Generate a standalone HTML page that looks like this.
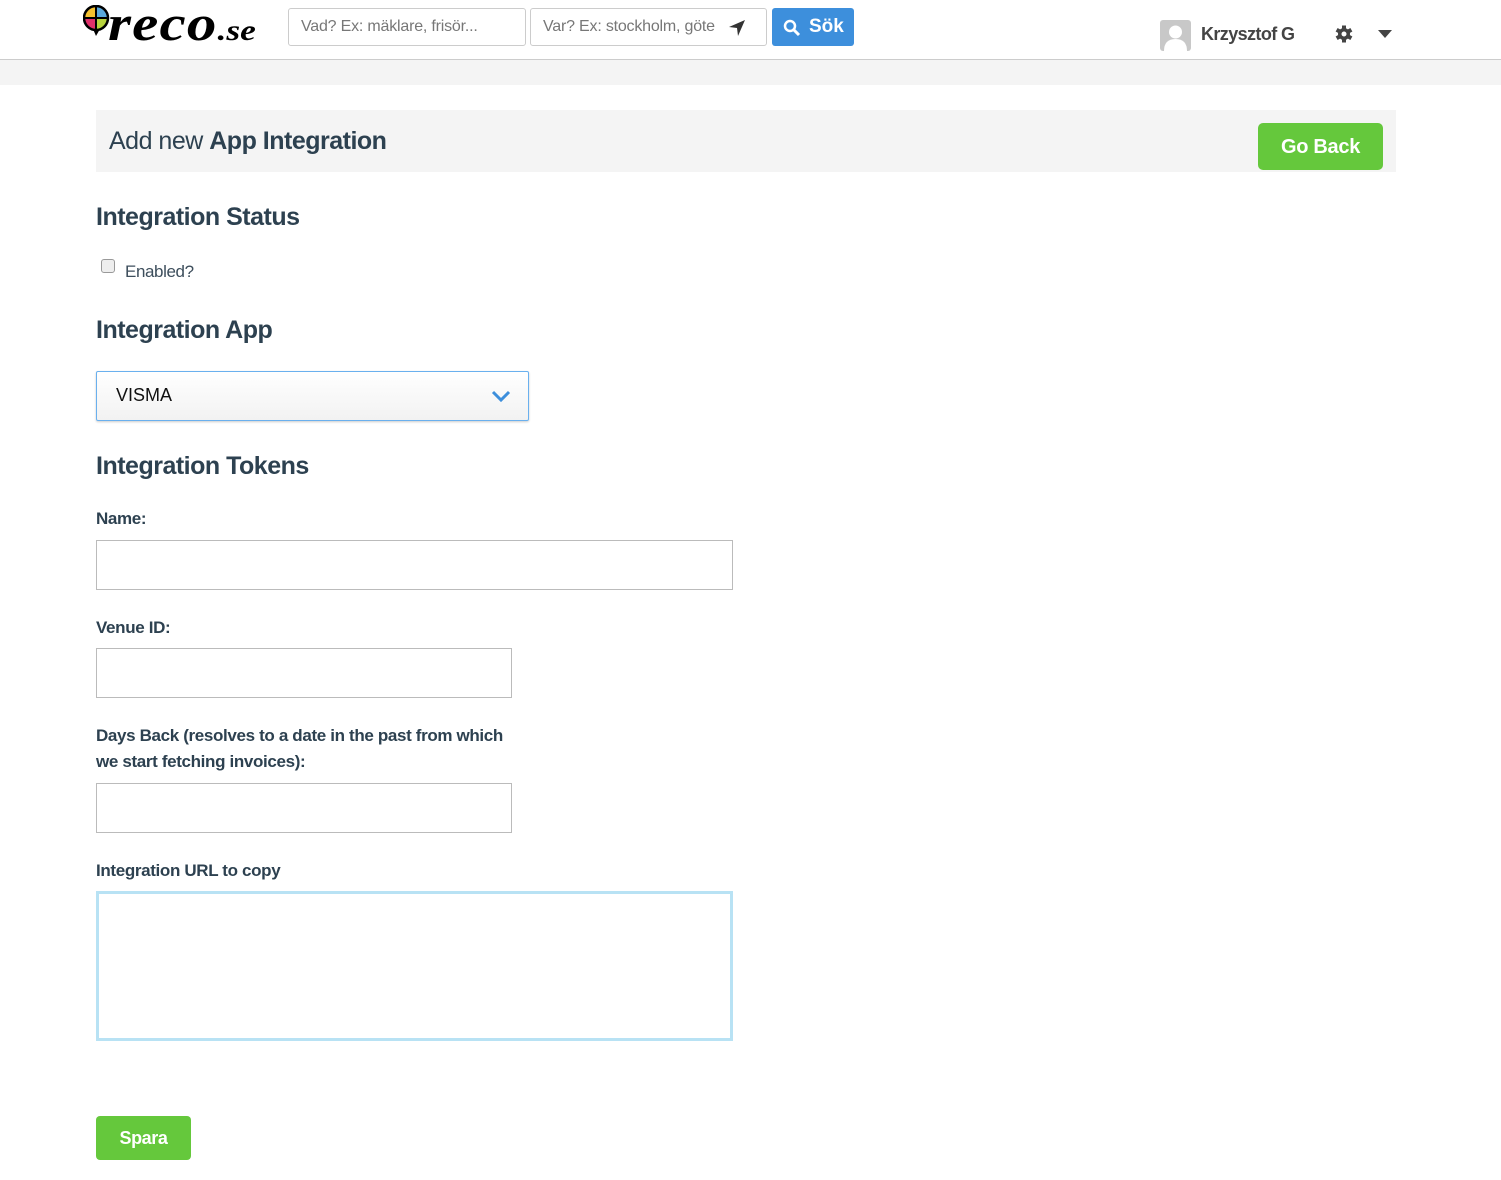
<!DOCTYPE html>
<html><head><meta charset="utf-8"><style>
*{box-sizing:border-box}
body{margin:0;width:1501px;height:1180px;background:#fff;font-family:"Liberation Sans",sans-serif;color:#2d3e4c;position:relative;overflow:hidden}
.abs{position:absolute}
.hdr{position:absolute;left:0;top:0;width:1501px;height:60px;border-bottom:1px solid #ccc;background:#fff}
.band{position:absolute;left:0;top:60px;width:1501px;height:25px;background:#f4f4f4}
.inp{position:absolute;border:1px solid #ccc;border-radius:3px;background:#fff;font-size:16px;color:#777;padding-left:12px;line-height:36px;overflow:hidden;white-space:nowrap;letter-spacing:-0.2px}
h2{position:absolute;margin:0;font-size:25px;font-weight:bold;color:#2d4150;left:96px;letter-spacing:-0.5px}
.lbl{position:absolute;left:96px;font-size:17px;font-weight:bold;color:#2d4150;line-height:26px;letter-spacing:-0.35px}
.box{position:absolute;left:96px;border:1px solid #bbb;background:#fff}
</style></head><body>
<div class="hdr"></div>
<div class="band"></div>
<svg class="abs" style="left:83px;top:5px" width="30" height="34" viewBox="0 0 30 34">
<path d="M13 1 A12 12 0 0 0 1 13 H13Z" fill="#f4c130"/><path d="M13 1 A12 12 0 0 1 25 13 H13Z" fill="#5aa8dc"/>
<path d="M1 13 A12 12 0 0 0 13 25 V13Z" fill="#e0306a"/><path d="M25 13 A12 12 0 0 1 13 25 V13Z" fill="#b7d33d"/>
<circle cx="13" cy="13" r="12" fill="none" stroke="#000" stroke-width="2.5"/><path d="M1 13H25M13 1V25" stroke="#000" stroke-width="2"/>
<path d="M10 24 L13 31 L17 24" fill="#000"/></svg>
<div class="abs" style="left:108px;top:-6px;font-family:'Liberation Serif',serif;font-style:italic;font-weight:bold;font-size:50px;color:#000;letter-spacing:1px;transform:scaleX(1.18);transform-origin:left">reco<span style="font-size:30px;letter-spacing:0">.se</span></div>
<div class="inp" style="left:288px;top:8px;width:238px;height:38px">Vad? Ex: mäklare, frisör...</div>
<div class="inp" style="left:530px;top:8px;width:237px;height:38px">Var? Ex: stockholm, göte<svg style="position:absolute;left:197px;top:10px" width="18" height="18" viewBox="0 0 18 18"><path d="M17 1 L1 8 L9 9 L10 17Z" fill="#333"/></svg></div>
<div class="abs" style="left:772px;top:8px;width:82px;height:38px;background:#3d8fdc;border-radius:3px;color:#fff;font-weight:bold;font-size:19px;line-height:38px;padding-left:37px">Sök
<svg style="position:absolute;left:11px;top:11px" width="18" height="18" viewBox="0 0 18 18"><circle cx="7" cy="7" r="5" fill="none" stroke="#fff" stroke-width="2.5"/><path d="M10.5 10.5 L16 16" stroke="#fff" stroke-width="3"/></svg></div>
<svg class="abs" style="left:1160px;top:20px" width="31" height="31" viewBox="0 0 31 31"><rect width="31" height="31" rx="3" fill="#c8c8c8"/><circle cx="15.5" cy="12" r="6.5" fill="#fff"/><path d="M4 31 Q4 19 15.5 19 Q27 19 27 31Z" fill="#fff"/></svg>
<div class="abs" style="left:1201px;top:24px;font-size:18px;font-weight:bold;color:#444;letter-spacing:-0.6px">Krzysztof G</div>
<svg class="abs" style="left:1335px;top:25px" width="18" height="18" viewBox="0 0 18 18"><g fill="#444"><circle cx="9" cy="9" r="6"/><rect x="7" y="0.5" width="4" height="17"/><rect x="7" y="0.5" width="4" height="17" transform="rotate(60 9 9)"/><rect x="7" y="0.5" width="4" height="17" transform="rotate(120 9 9)"/></g><circle cx="9" cy="9" r="2.5" fill="#fff"/></svg>
<svg class="abs" style="left:1378px;top:30px" width="14" height="8"><path d="M0 0H14L7 8Z" fill="#444"/></svg>
<div class="abs" style="left:96px;top:110px;width:1300px;height:62px;background:#f4f4f4"></div>
<div class="abs" style="left:109px;top:127px;font-size:25px;color:#2d4150;letter-spacing:-0.5px">Add new <b>App Integration</b></div>
<div class="abs" style="left:1258px;top:123px;width:125px;height:47px;background:#65c83c;border-radius:5px;color:#fff;font-weight:bold;font-size:20px;line-height:49px;text-align:center;letter-spacing:-0.3px">Go Back</div>
<h2 style="top:203px">Integration Status</h2>
<div class="abs" style="left:101px;top:259px;width:14px;height:14px;border:1px solid #999;border-radius:3px;background:#eee"></div>
<div class="abs" style="left:125px;top:262px;font-size:17px;color:#3d4e5c;letter-spacing:-0.4px">Enabled?</div>
<h2 style="top:316px">Integration App</h2>
<div class="abs" style="left:96px;top:371px;width:433px;height:50px;border:1px solid #6ab0ee;border-radius:2px;background:linear-gradient(#fff,#f2f2f2);box-shadow:0 1px 2px rgba(0,0,0,.2);font-size:18px;color:#111;line-height:46px;padding-left:19px">VISMA
<svg style="position:absolute;left:394px;top:18px" width="20" height="12"><path d="M2 2 L10 10 L18 2" fill="none" stroke="#3d8fdc" stroke-width="3"/></svg></div>
<h2 style="top:452px">Integration Tokens</h2>
<div class="lbl" style="top:506px">Name:</div>
<div class="box" style="top:540px;width:637px;height:50px"></div>
<div class="lbl" style="top:615px">Venue ID:</div>
<div class="box" style="top:648px;width:416px;height:50px"></div>
<div class="lbl" style="top:723px">Days Back (resolves to a date in the past from which<br>we start fetching invoices):</div>
<div class="box" style="top:783px;width:416px;height:50px"></div>
<div class="lbl" style="top:858px">Integration URL to copy</div>
<div class="box" style="top:891px;width:637px;height:150px;border:3px solid #b8e2f4"></div>
<div class="abs" style="left:96px;top:1116px;width:95px;height:44px;background:#65c83c;border-radius:4px;color:#fff;font-weight:bold;font-size:18px;line-height:44px;text-align:center;letter-spacing:-0.4px">Spara</div>
</body></html>
